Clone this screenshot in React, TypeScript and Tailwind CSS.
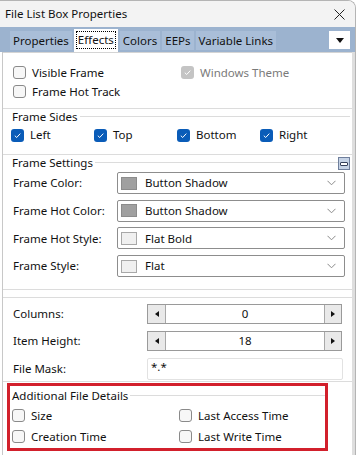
import React from 'react';

const Check = ({ checked, disabled }: { checked?: boolean; disabled?: boolean }) => {
  if (checked) {
    return (
      <span className={`w-[13px] h-[13px] rounded-[3px] flex items-center justify-center shrink-0 ${disabled ? 'bg-[#c4c4c4]' : 'bg-[#0a5cb8]'}`}>
        <svg width="9" height="9" viewBox="0 0 9 9">
          <path d="M1.8 4.7 L3.7 6.5 L7.3 2.6" fill="none" stroke="white" strokeWidth="1" />
        </svg>
      </span>
    );
  }
  return <span className="w-[13px] h-[13px] rounded-[3px] border border-[#8a8a8a] bg-[#f7f7f7] shrink-0" />;
};

const CheckItem = ({ label, checked, disabled, className = '' }: { label: string; checked?: boolean; disabled?: boolean; className?: string }) => (
  <div className={`flex items-center gap-[6px] ${className}`}>
    <Check checked={checked} disabled={disabled} />
    <span className={disabled ? 'text-[#7a7a7a]' : ''}>{label}</span>
  </div>
);

const GroupHeader = ({ title, collapse }: { title: string; collapse?: boolean }) => (
  <div className="flex items-start h-[14px] leading-[14px] pl-[9px] pr-[2px]">
    <span className="pr-[2px]">{title}</span>
    <div className="flex-1 h-px bg-[#dcdcdc] mt-[6px]" />
    {collapse && (
      <div className="w-[12px] h-[13px] border border-[#6f7f9c] bg-[#c6d3e6] flex items-center justify-center mt-[1px]">
        <div className="w-[8px] h-[4px] rounded-[1px] border border-[#34405a] bg-white" />
      </div>
    )}
  </div>
);

const Combo = ({ label, swatch, value }: { label: string; swatch: 'dark' | 'light'; value: string }) => (
  <div className="flex items-center h-[22px] pl-[10px]">
    <span className="w-[104px]">{label}</span>
    <div className="w-[228px] h-[22px] border border-[#8d8d8d] rounded-[2px] bg-white flex items-center pl-[3px] pr-[8px]">
      <span
        className={`w-[16px] h-[13px] border shrink-0 ${swatch === 'dark' ? 'bg-[#a0a0a0] border-[#8c8c8c]' : 'bg-[#f0f0f0] border-[#a8a8a8]'}`}
      />
      <span className="ml-[8px] flex-1">{value}</span>
      <svg width="9" height="6" viewBox="0 0 9 6">
        <path d="M0.5 0.8 L4.5 4.8 L8.5 0.8" fill="none" stroke="#8a8a8a" strokeWidth="1" />
      </svg>
    </div>
  </div>
);

const Spin = ({ label, value }: { label: string; value: string }) => (
  <div className="flex items-center h-[20px] pl-[10px]">
    <span className="w-[134px]">{label}</span>
    <div className="w-[195px] h-[20px] flex border border-[#9a9a9a] bg-white">
      <div className="w-[18px] h-full bg-[#e9e9e9] border-r border-[#a8a8a8] flex items-center justify-center">
        <svg width="4" height="6" viewBox="0 0 4 6"><path d="M4 0 L0 3 L4 6 Z" fill="#111" /></svg>
      </div>
      <div className="flex-1 flex items-center justify-center">{value}</div>
      <div className="w-[17px] h-full bg-[#e9e9e9] border-l border-[#a8a8a8] flex items-center justify-center">
        <svg width="4" height="6" viewBox="0 0 4 6"><path d="M0 0 L4 3 L0 6 Z" fill="#111" /></svg>
      </div>
    </div>
  </div>
);

export default function App() {
  const tabs = ['Properties', 'Effects', 'Colors', "EEPs", 'Variable Links'];
  return (
    <div className="w-[359px] h-[455px] bg-white overflow-hidden text-[11.5px] text-[#111] font-['Noto_Sans',sans-serif] leading-none">
      <div className="w-[356px] h-full flex flex-col border-r border-t border-[#b4b4b4] rounded-tr-[8px] overflow-hidden">
        {/* title bar */}
        <div className="h-[26px] bg-[#f3f3f3] flex items-center justify-between pl-[5px] pr-[10px] shrink-0">
          <span>File List Box Properties</span>
          <svg width="11" height="11" viewBox="0 0 11 11">
            <path d="M0.5 0.5 L10.5 10.5 M10.5 0.5 L0.5 10.5" stroke="#222" strokeWidth="1" />
          </svg>
        </div>

        {/* tabs */}
        <div className="h-[25px] bg-[#9cb3cf] flex items-end pl-[10px] pr-[5px] shrink-0">
          <div className="flex items-end gap-[2px] flex-1">
            {tabs.map((t) =>
              t === 'Effects' ? (
                <div key={t} className="h-[23px] bg-white px-[2px] pt-[2px]">
                  <div className="h-[18px] px-[1px] border border-dotted border-black flex items-center">{t}</div>
                </div>
              ) : (
                <div key={t} className="h-[19px] mb-[2px] bg-[#a9bed8] px-[3px] flex items-center">{t}</div>
              )
            )}
          </div>
          <div className="w-[21px] h-[18px] bg-white mb-[3px] flex items-center justify-center">
            <svg width="8" height="5" viewBox="0 0 8 5"><path d="M0 0 L8 0 L4 5 Z" fill="#111" /></svg>
          </div>
        </div>

        {/* body */}
        <div className="flex-1 flex ml-[2px] border-l border-[#c8c8c8]">
          <div className="flex-1 flex flex-col border-t border-[#d4d4d4]">
            {/* section 1 */}
            <div className="h-[56px] border-b border-[#dcdcdc] pt-[10px] pl-[10px] flex">
              <div className="flex flex-col w-[168px]">
                <CheckItem label="Visible Frame" className="h-[19px]" />
                <CheckItem label="Frame Hot Track" className="h-[19px]" />
              </div>
              <CheckItem label="Windows Theme" checked disabled className="h-[19px]" />
            </div>

            {/* frame sides */}
            <div className="h-[46px] border-b border-[#dcdcdc] pt-[1px]">
              <GroupHeader title="Frame Sides" />
              <div className="flex h-[20px] mt-[1px] pl-[8px]">
                <CheckItem label="Left" checked className="w-[83px]" />
                <CheckItem label="Top" checked className="w-[83px]" />
                <CheckItem label="Bottom" checked className="w-[83px]" />
                <CheckItem label="Right" checked />
              </div>
            </div>

            {/* frame settings */}
            <div className="h-[135px] border-b border-[#dcdcdc] pt-[1px]">
              <GroupHeader title="Frame Settings" collapse />
              <div className="flex flex-col gap-[5.7px] mt-[2px]">
                <Combo label="Frame Color:" swatch="dark" value="Button Shadow" />
                <Combo label="Frame Hot Color:" swatch="dark" value="Button Shadow" />
                <Combo label="Frame Hot Style:" swatch="light" value="Flat Bold" />
                <Combo label="Frame Style:" swatch="light" value="Flat" />
              </div>
            </div>

            {/* spins */}
            <div className="h-[85px] mt-[7px] border-t border-b border-[#dcdcdc] pt-[6px] flex flex-col">
              <Spin label="Columns:" value="0" />
              <div className="h-[7px]" />
              <Spin label="Item Height:" value="18" />
              <div className="h-[7px]" />
              <div className="flex items-center h-[22px] pl-[10px]">
                <span className="w-[134px]">File Mask:</span>
                <div className="w-[196px] h-[22px] border border-[#e2e2e2] rounded-[2px] pl-[3px] pt-[2px]">*.*</div>
              </div>
            </div>

            {/* additional file details */}
            <div className="mt-[1px] ml-[4px] w-[321px] h-[68px] border-[3px] border-[#d2202c] pt-[3px]">
              <div className="flex items-start h-[14px] leading-[14px] pl-[2px]">
                <span className="pr-[2px]">Additional File Details</span>
                <div className="flex-1 h-px bg-[#dcdcdc] mt-[6px]" />
              </div>
              <div className="flex pl-[2px] mt-[2px]">
                <div className="flex flex-col w-[167px]">
                  <CheckItem label="Size" className="h-[21px]" />
                  <CheckItem label="Creation Time" className="h-[21px]" />
                </div>
                <div className="flex flex-col">
                  <CheckItem label="Last Access Time" className="h-[21px]" />
                  <CheckItem label="Last Write Time" className="h-[21px]" />
                </div>
              </div>
            </div>
          </div>
          <div className="w-[3px] bg-[#dedede]" />
        </div>
      </div>
    </div>
  );
}
